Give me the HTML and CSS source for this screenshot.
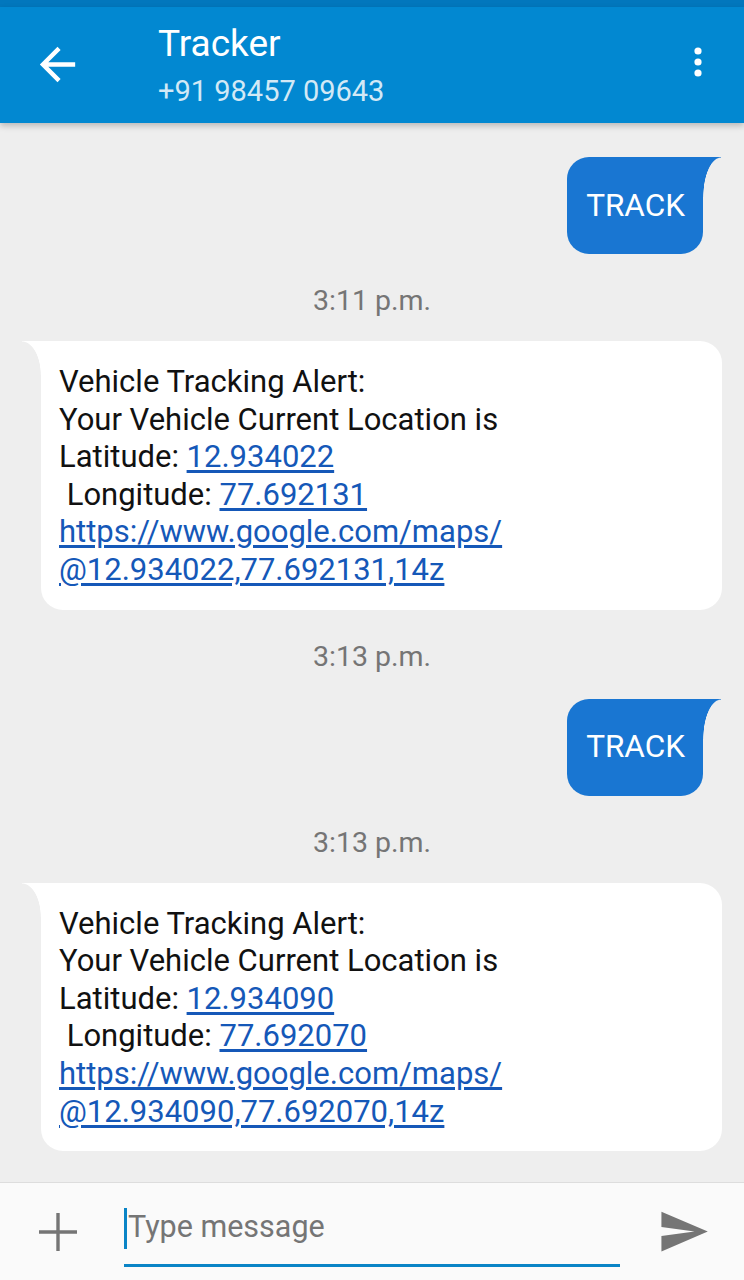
FILE: index.html
```html
<!DOCTYPE html>
<html lang="en">
<head>
  <meta charset="UTF-8">
  <meta name="viewport" content="width=device-width, initial-scale=1">
  <title>Tracker</title>
  <link rel="stylesheet" href="styles.css">
</head>
<body>

  <div class="status-strip"></div>

  <header class="topbar">
    <button class="icon-btn back">
      <svg viewBox="0 0 24 24" width="53" height="53"><path fill="#fff" d="M20 11H7.83l5.59-5.59L12 4l-8 8 8 8 1.41-1.41L7.83 13H20v-2z"/></svg>
    </button>
    <div class="contact">
      <div class="name">Tracker</div>
      <div class="number">+91 98457 09643</div>
    </div>
    <button class="icon-btn menu">
      <svg viewBox="0 0 10 32" width="10" height="32"><circle cx="5" cy="5" r="3.6" fill="#fff"/><circle cx="5" cy="16" r="3.6" fill="#fff"/><circle cx="5" cy="27" r="3.6" fill="#fff"/></svg>
    </button>
  </header>

  <main class="thread">
    <div class="bubble out">TRACK</div>
    <div class="stamp">3:11 p.m.</div>
    <div class="bubble in">
      Vehicle Tracking Alert:<br>
      Your Vehicle Current Location is<br>
      Latitude: <a href="#">12.934022</a><br>
      &nbsp;Longitude: <a href="#">77.692131</a><br>
      <a href="#">https://www.google.com/maps/<br>@12.934022,77.692131,14z</a>
    </div>
    <div class="stamp">3:13 p.m.</div>
    <div class="bubble out">TRACK</div>
    <div class="stamp">3:13 p.m.</div>
    <div class="bubble in">
      Vehicle Tracking Alert:<br>
      Your Vehicle Current Location is<br>
      Latitude: <a href="#">12.934090</a><br>
      &nbsp;Longitude: <a href="#">77.692070</a><br>
      <a href="#">https://www.google.com/maps/<br>@12.934090,77.692070,14z</a>
    </div>
  </main>

  <footer class="composer">
    <button class="icon-btn plus">
      <svg viewBox="0 0 38 38" width="38" height="38"><path d="M19 0v38M0 19h38" stroke="#757575" stroke-width="3.4" fill="none"/></svg>
    </button>
    <div class="field">
      <span class="caret"></span><span class="placeholder">Type message</span>
    </div>
    <button class="icon-btn send">
      <svg viewBox="0 0 24 24" width="53" height="53"><path fill="#757575" d="M2.01 21L23 12 2.01 3 2 10l15 2-15 2z"/></svg>
    </button>
  </footer>

</body>
</html>
```

FILE: styles.css
```css
body {
  margin: 0;
  padding: 0;
  font-family: Roboto, 'Noto Sans', sans-serif;
  background: #eeeeee;
  width: 744px;
  height: 1280px;
  overflow: hidden;
  display: flex;
  flex-direction: column;
}

.status-strip {
  height: 7px;
  background: #0277bd;
}

.topbar {
  height: 116px;
  background: #0288d1;
  display: flex;
  align-items: center;
  box-shadow: 0 3px 6px rgba(0, 0, 0, 0.22);
  position: relative;
  z-index: 2;
}

.icon-btn {
  background: none;
  border: none;
  padding: 0;
  display: flex;
  align-items: center;
  justify-content: center;
}

.back {
  margin-left: 31px;
  margin-top: -2px;
}

.contact {
  margin-left: 74px;
  flex: 1;
  margin-top: 0;
}

.name {
  color: #fff;
  font-size: 37px;
  line-height: 42px;
}

.number {
  color: #d2e9f6;
  font-size: 29px;
  line-height: 34px;
  margin-top: 9px;
}

.menu {
  margin-right: 41px;
  margin-top: -6px;
}

.thread {
  flex: 1;
  display: flex;
  flex-direction: column;
  padding-top: 32px;
}

.bubble {
  position: relative;
  border-radius: 22px;
}

.bubble.out {
  align-self: flex-end;
  margin-top: 2px;
  margin-right: 41px;
  background: #1976d2;
  color: #fff;
  font-size: 31.5px;
  line-height: 40px;
  padding: 28.5px 18px 28.5px 19px;
  border-top-right-radius: 0;
}

.bubble.out::after {
  content: "";
  position: absolute;
  top: 0;
  right: -18px;
  width: 18px;
  height: 40px;
  background: radial-gradient(ellipse 18px 40px at 100% 100%, transparent 97%, #1976d2 100%);
}

.bubble.in {
  margin-left: 41px;
  margin-right: 22px;
  align-self: stretch;
  background: #fff;
  color: #111;
  font-size: 31px;
  line-height: 37.6px;
  padding: 22px 18px 21px;
  border-top-left-radius: 0;
}

.bubble.in::before {
  content: "";
  position: absolute;
  top: 0;
  left: -19px;
  width: 19px;
  height: 34px;
  background: radial-gradient(ellipse 19px 34px at 0% 100%, transparent 97%, #fff 100%);
}

.bubble.in a {
  color: #1558b8;
  text-decoration: underline;
  text-underline-offset: 3px;
}

.stamp {
  text-align: center;
  color: #757575;
  font-size: 28.5px;
  line-height: 30px;
  margin: 32px 0 25px;
}

.composer {
  height: 97px;
  background: #fafafa;
  border-top: 1px solid #dddddd;
  display: flex;
  align-items: center;
}

.plus {
  margin-left: 39px;
  margin-top: 0;
}

.field {
  margin-left: 47px;
  width: 496px;
  height: 62px;
  border-bottom: 3px solid #0a84c6;
  display: flex;
  align-items: center;
  margin-top: 6px;
}

.caret {
  width: 3px;
  height: 41px;
  background: #0a84c6;
  margin-top: -10px;
}

.placeholder {
  color: #757575;
  font-size: 30.5px;
  margin-left: 1px;
  margin-top: -14px;
}

.send {
  margin-left: 37px;
}
```
